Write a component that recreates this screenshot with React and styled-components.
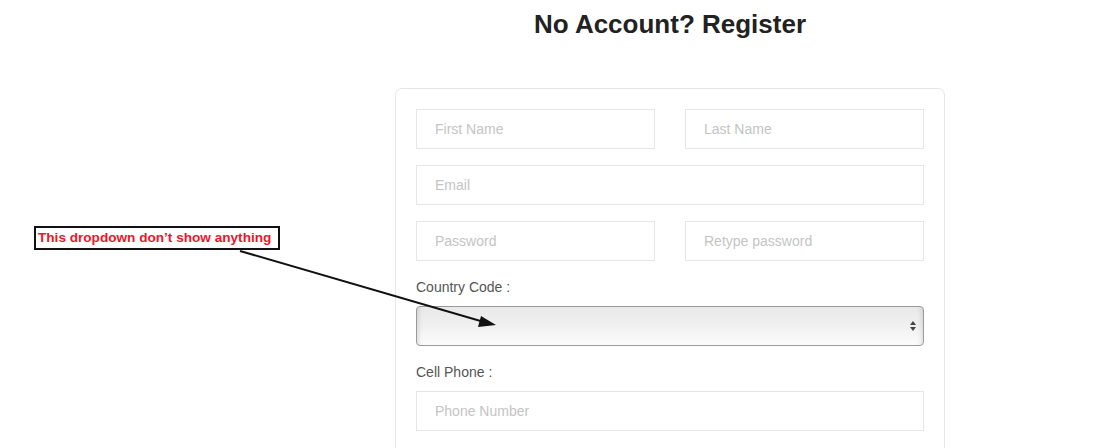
import React from 'react';
import styled, { createGlobalStyle } from 'styled-components';

const GlobalStyle = createGlobalStyle`
    html, body {
        margin: 0;
        padding: 0;
        background: #ffffff;
        font-family: "Liberation Sans", Arial, sans-serif;
    }
`

const Page = styled.div`
    position: relative;
    width: 1104px;
    height: 448px;
    overflow: hidden;
    padding-left: 395px;
    box-sizing: border-box;
`

const Column = styled.div`
    width: 550px;
`

const Title = styled.h1`
    margin: 0;
    padding-top: 9px;
    height: 88px;
    box-sizing: border-box;
    text-align: center;
    font-size: 26px;
    font-weight: bold;
    color: #222;
    line-height: 30px;
`

const Card = styled.div`
    border: 1px solid #e6e6e6;
    border-radius: 7px;
    padding: 20px 20px 40px;
    display: flex;
    flex-direction: column;
    gap: 16px;
`

const Row = styled.div`
    display: grid;
    grid-template-columns: ${props => props.cols || '1fr'};
    gap: 30px;
`

const Input = styled.input`
    height: 40px;
    box-sizing: border-box;
    border: 1px solid #e6e6e6;
    border-radius: 0;
    padding: 0 18px;
    font-family: "Liberation Sans", Arial, sans-serif;
    font-size: 14px;
    color: #333;
    outline: none;
    width: 100%;

    &::placeholder {
        color: #c4c4c4;
    }
`

const Field = styled.div`
    display: flex;
    flex-direction: column;
    gap: 11px;
    margin-top: 2px;
`

const Label = styled.label`
    font-size: 14px;
    color: #555;
    line-height: 16px;
`

const SelectWrap = styled.div`
    position: relative;
    height: 40px;
`

const Select = styled.select`
    appearance: none;
    -webkit-appearance: none;
    width: 100%;
    height: 40px;
    box-sizing: border-box;
    border: 1px solid #9a9a9a;
    border-radius: 4px;
    background: linear-gradient(to bottom, #e9e9e9 0%, #efefef 45%, #fcfcfc 100%);
    box-shadow: inset 6px 0 6px -6px rgba(0,0,0,0.18), inset -6px 0 6px -6px rgba(0,0,0,0.18);
    outline: none;
`

const Arrows = styled.svg`
    position: absolute;
    right: 7px;
    top: 14px;
    pointer-events: none;
`

const Note = styled.div`
    position: absolute;
    left: 34px;
    top: 226px;
    width: 246px;
    height: 24px;
    box-sizing: border-box;
    border: 2px solid #111;
    background: #fff;
    color: #f0142a;
    font-weight: bold;
    font-size: 13.6px;
    line-height: 19px;
    padding-left: 2px;
    white-space: nowrap;
`

const Pointer = styled.svg`
    position: absolute;
    left: 0;
    top: 0;
    pointer-events: none;
`

export default function App() {
    return (
        <>
            <GlobalStyle />
            <Page>
                <Column>
                    <Title>No Account? Register</Title>
                    <Card>
                        <Row cols="1fr 1fr">
                            <Input placeholder="First Name" />
                            <Input placeholder="Last Name" />
                        </Row>
                        <Row>
                            <Input placeholder="Email" />
                        </Row>
                        <Row cols="1fr 1fr">
                            <Input type="password" placeholder="Password" />
                            <Input type="password" placeholder="Retype password" />
                        </Row>
                        <Field>
                            <Label>Country Code :</Label>
                            <SelectWrap>
                                <Select></Select>
                                <Arrows width="8" height="12" viewBox="0 0 8 12">
                                    <path d="M4 1 L7 5 L1 5 Z" fill="#444" />
                                    <path d="M4 11 L7 7 L1 7 Z" fill="#444" />
                                </Arrows>
                            </SelectWrap>
                        </Field>
                        <Field>
                            <Label>Cell Phone :</Label>
                            <Input placeholder="Phone Number" />
                        </Field>
                    </Card>
                </Column>
                <Note>This dropdown don’t show anything</Note>
                <Pointer width="1104" height="448">
                    <line x1="240" y1="251" x2="484" y2="322" stroke="#111" strokeWidth="2" />
                    <path d="M496 325 L481 316 L478 327 Z" fill="#111" />
                </Pointer>
            </Page>
        </>
    );
}
